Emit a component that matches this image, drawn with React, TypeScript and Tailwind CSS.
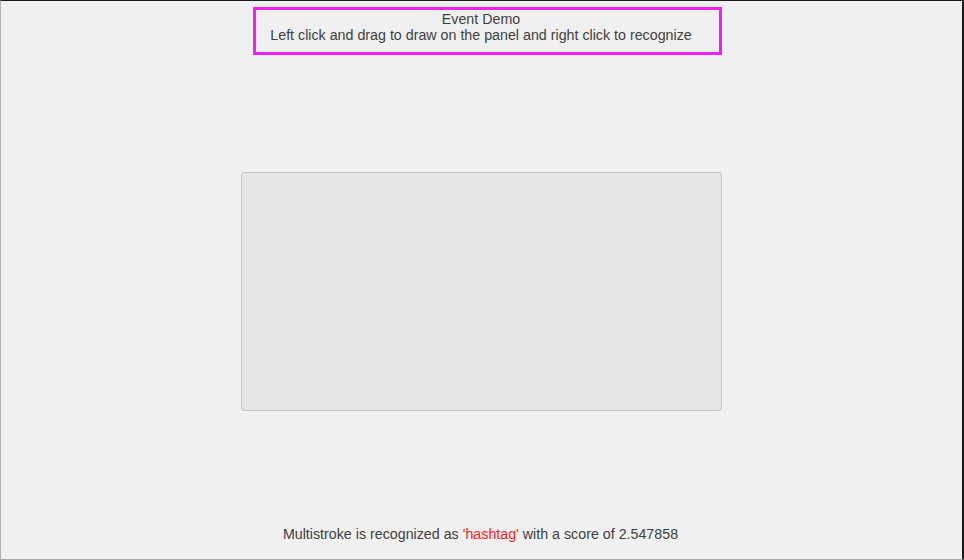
export default function App() {
  return (
    <div
      className="flex h-[560px] w-[964px] flex-col border-t border-l border-r-2 border-b border-t-[#1c1c1c] border-l-[#b4b4b4] border-r-[#1c1c1c] border-b-[#a8a8a8] bg-[#f0f0f0] text-[14.25px] text-[#404040]"
      style={{ fontFamily: '"Liberation Sans", Arial, sans-serif' }}
    >
      <div className="ml-[252px] mt-[6px] flex h-[48px] w-[469px] flex-col items-center border-[3px] border-[#f020f0] pr-[13px] pt-[1px] leading-[16px]">
        <p>Event Demo</p>
        <p>Left click and drag to draw on the panel and right click to recognize</p>
      </div>

      <div className="ml-[240px] mt-[117px] h-[239px] w-[481px] rounded-[3px] border border-[#c6c6c6] bg-[#e6e6e6]" />

      <p className="mt-[115px] pr-[2px] text-center leading-[16px]">
        Multistroke is recognized as <span className="text-[#ff2020]">'hashtag'</span> with a score of 2.547858
      </p>
    </div>
  );
}
